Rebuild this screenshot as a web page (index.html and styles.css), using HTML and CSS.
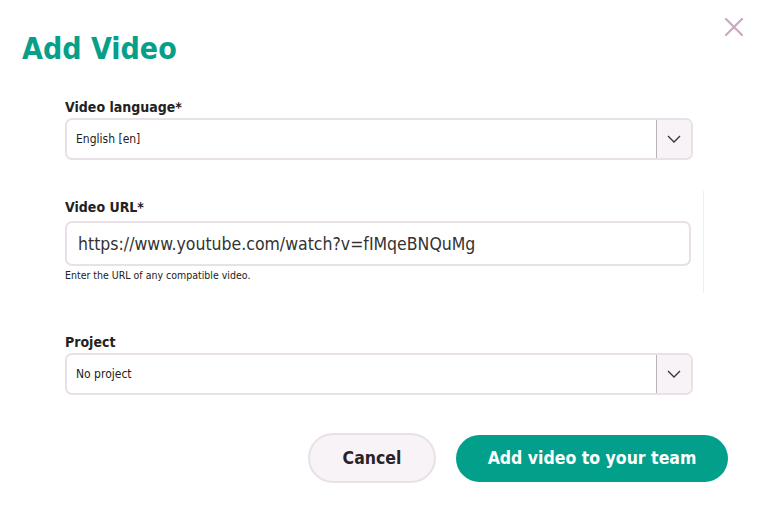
FILE: index.html
```html
<!DOCTYPE html>
<html>
<head>
<meta charset="utf-8">
<link rel="stylesheet" href="styles.css">
</head>
<body>
<div class="dialog">
  <button class="close" aria-label="Close">
    <svg width="20" height="20" viewBox="0 0 20 20"><path d="M2 2L18 18M18 2L2 18" stroke="#c8a9bf" stroke-width="2.2" stroke-linecap="round"/></svg>
  </button>
  <h1 class="title">Add Video</h1>
  <div class="form">
    <div class="field field-lang">
      <label class="label">Video language*</label>
      <div class="select">
        <span class="select-value">English [en]</span>
        <span class="select-arrow"><svg width="14" height="8" viewBox="0 0 14 8"><path d="M1 1L7 7L13 1" fill="none" stroke="#333" stroke-width="1.3"/></svg></span>
      </div>
    </div>
    <div class="field field-url">
      <label class="label">Video URL*</label>
      <div class="input">https://www.youtube.com/watch?v=fIMqeBNQuMg</div>
      <div class="help">Enter the URL of any compatible video.</div>
    </div>
    <div class="field field-project">
      <label class="label">Project</label>
      <div class="select">
        <span class="select-value">No project</span>
        <span class="select-arrow"><svg width="14" height="8" viewBox="0 0 14 8"><path d="M1 1L7 7L13 1" fill="none" stroke="#333" stroke-width="1.3"/></svg></span>
      </div>
    </div>
  </div>
  <div class="actions">
    <button class="btn btn-cancel">Cancel</button>
    <button class="btn btn-primary">Add video to your team</button>
  </div>
</div>
</body>
</html>
```

FILE: styles.css
```css
html, body {
  margin: 0;
  padding: 0;
  background: #fff;
}
body {
  font-family: "DejaVu Sans Condensed", "DejaVu Sans", sans-serif;
  font-stretch: condensed;
  color: #222;
  width: 762px;
  height: 512px;
  overflow: hidden;
}
.dialog {
  position: relative;
  padding: 30px 0 0 22px;
}
.close {
  position: absolute;
  top: 17px;
  right: 18px;
  background: none;
  border: 0;
  padding: 0;
  width: 20px;
  height: 20px;
}
.title {
  margin: 0;
  font-size: 30px;
  line-height: 38px;
  font-weight: bold;
  color: #079f89;
}
.form {
  margin-left: 43px;
  width: 628px;
  margin-top: 31px;
}
.label {
  display: block;
  font-size: 14px;
  font-weight: bold;
  line-height: 17px;
  color: #222;
  margin-bottom: 2px;
}
.select {
  display: flex;
  height: 42px;
  box-sizing: border-box;
  border: 2px solid #e9e0e8;
  border-radius: 7px;
  overflow: hidden;
}
.select-value {
  flex: 1;
  display: flex;
  align-items: center;
  padding-left: 9px;
  font-size: 12px;
  color: #222;
}
.select-arrow {
  width: 34px;
  display: flex;
  align-items: center;
  justify-content: center;
  background: #f7f3f6;
  border-left: 1px solid #b9b2b7;
}
.field-url {
  width: 638px;
  border-right: 1px solid #eeeeee;
  margin-top: 31px;
  padding-top: 8px;
  padding-bottom: 12px;
}
.field-url .label {
  margin-bottom: 5px;
}
.input {
  width: 626px;
  box-sizing: border-box;
  height: 45px;
  border: 2px solid #e9e0e8;
  border-radius: 7px;
  display: flex;
  align-items: center;
  padding-left: 11px;
  font-size: 17.5px;
  color: #333;
}
.help {
  font-size: 10.5px;
  line-height: 12px;
  margin-top: 3px;
  color: #222;
}
.field-project {
  margin-top: 41px;
}
.actions {
  display: flex;
  justify-content: flex-end;
  align-items: center;
  gap: 20px;
  margin-top: 38px;
  margin-right: 34px;
}
.btn {
  font-family: inherit;
  font-stretch: condensed;
  font-weight: bold;
  font-size: 17.5px;
  border-radius: 30px;
  cursor: pointer;
}
.btn-cancel {
  width: 128px;
  height: 50px;
  background: #f7f3f6;
  border: 2px solid #e9e0e8;
  color: #2b2228;
}
.btn-primary {
  width: 272px;
  height: 47px;
  background: #02a08a;
  border: 0;
  color: #fff;
}
```
